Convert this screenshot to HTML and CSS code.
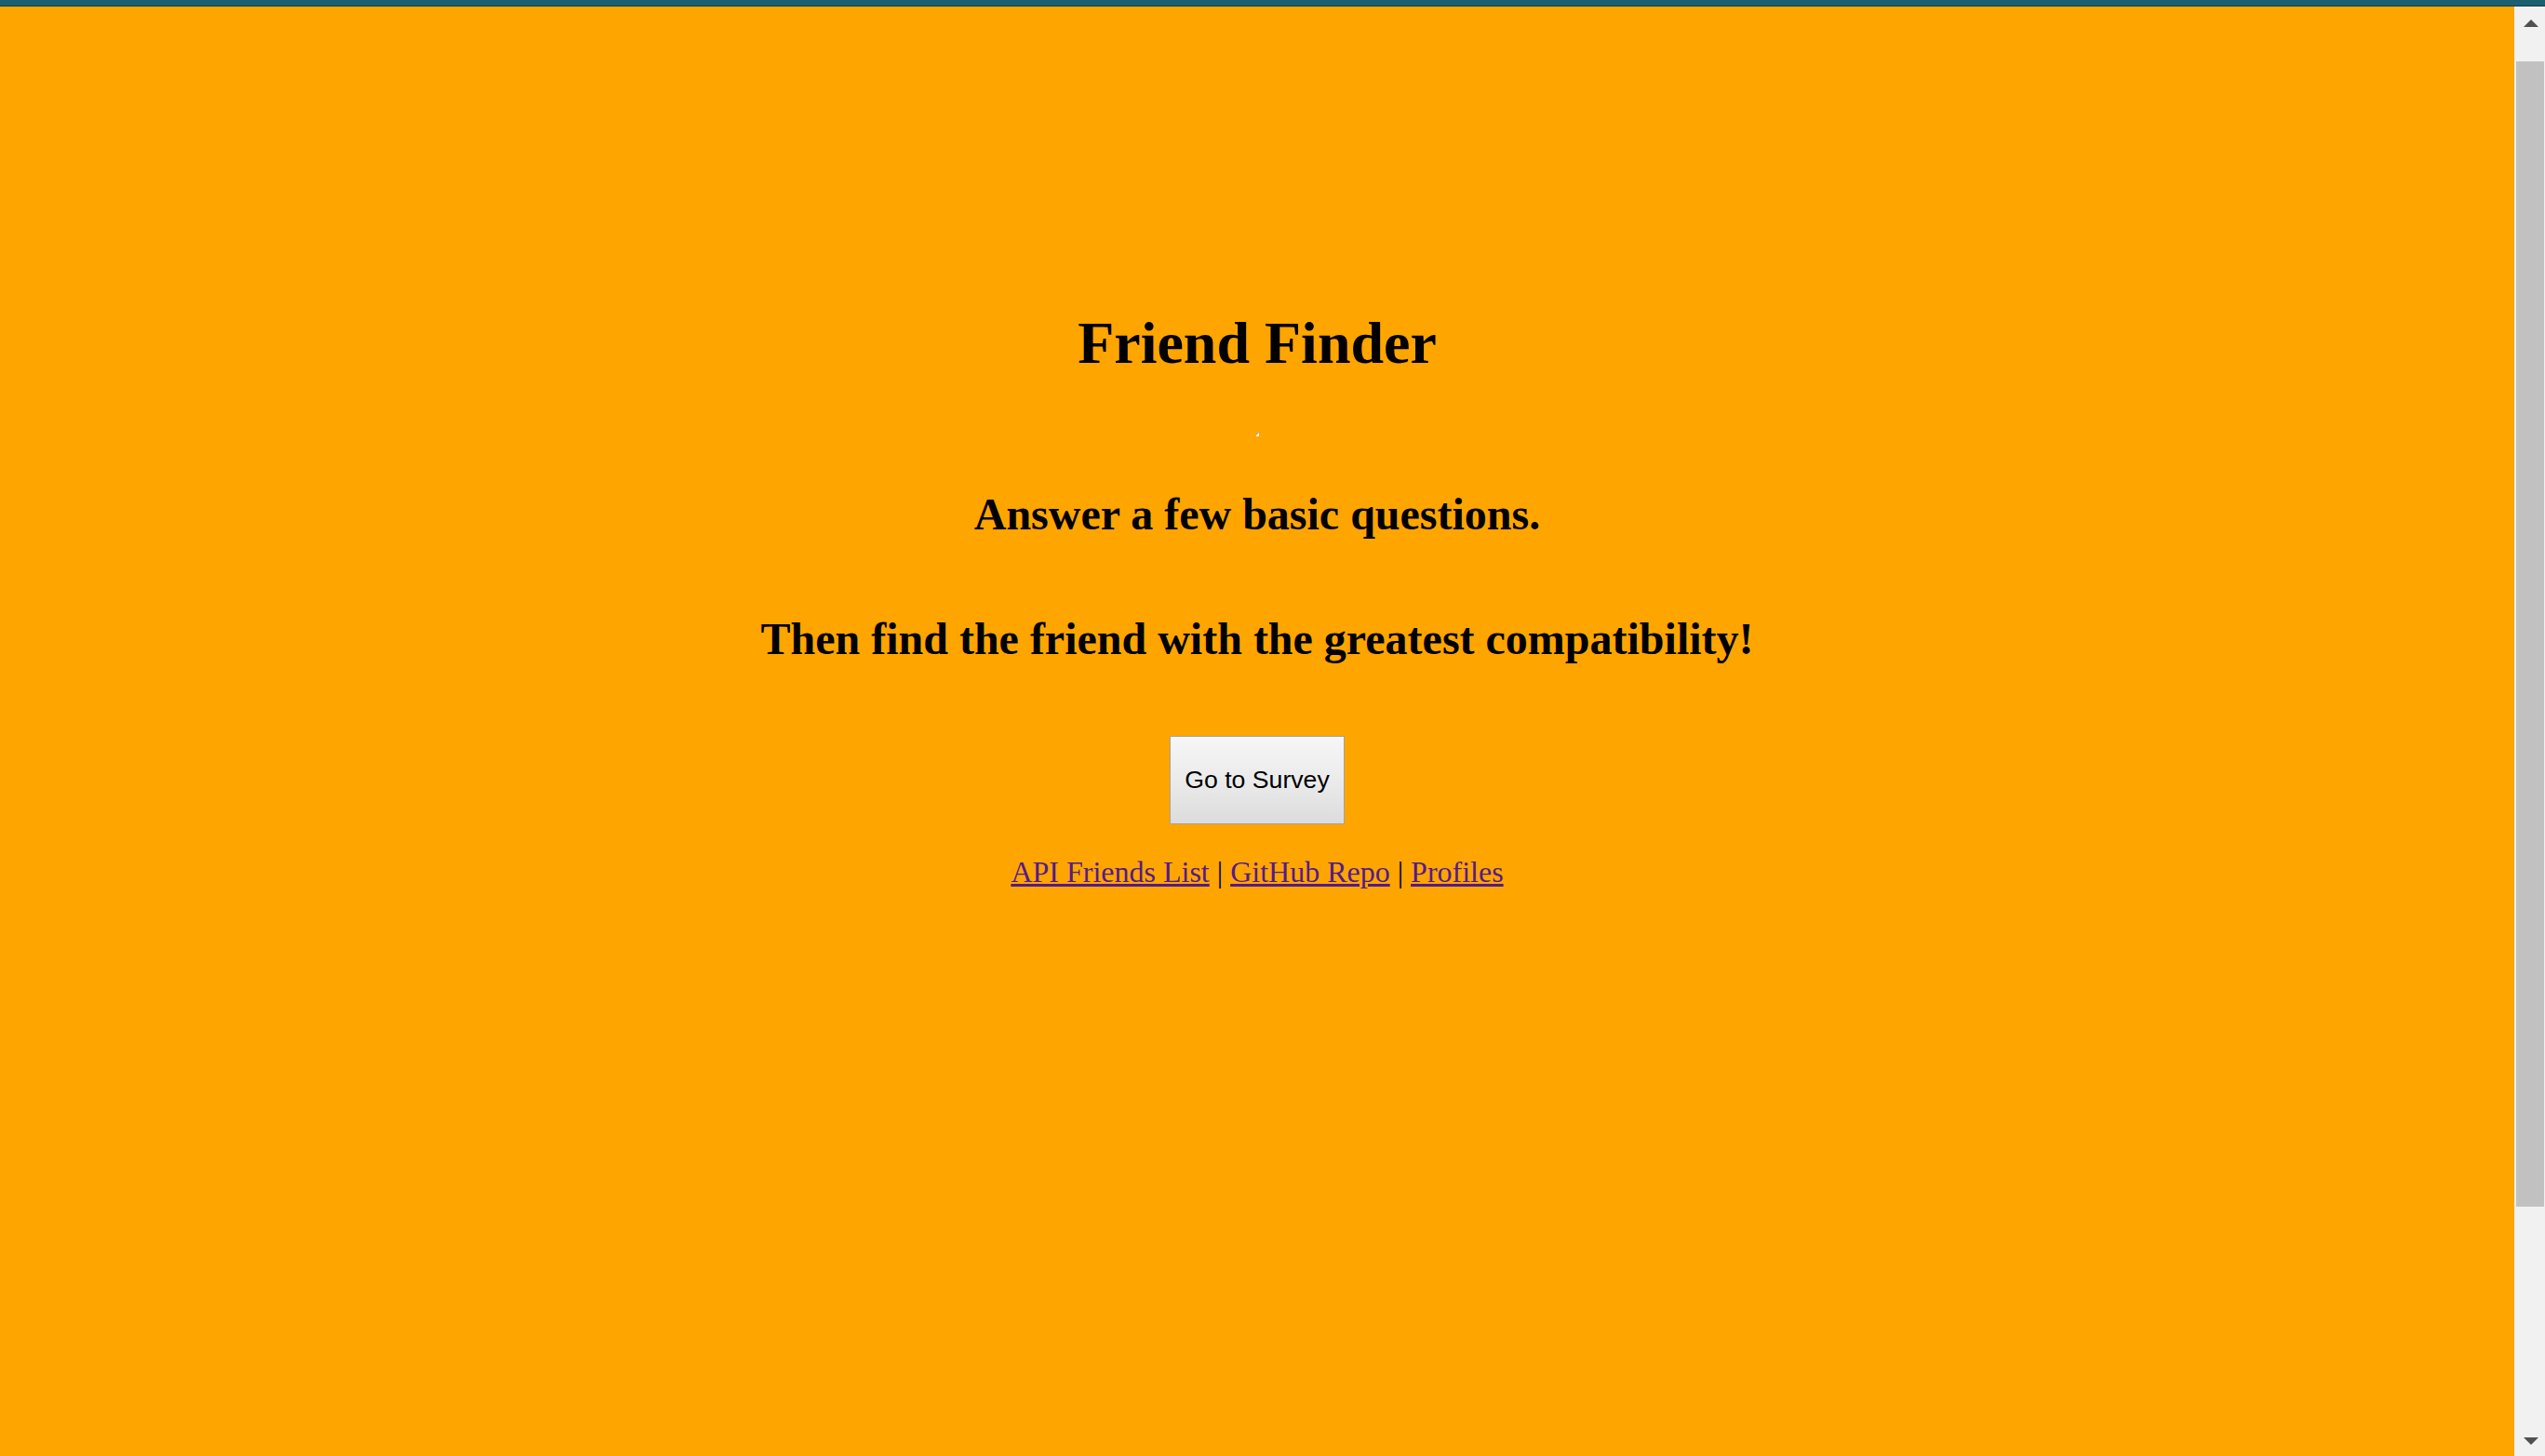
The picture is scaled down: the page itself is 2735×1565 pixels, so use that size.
FILE: index.html
```html
<!DOCTYPE html>
<html lang="en">
<head>
<meta charset="utf-8">
<title>Friend Finder</title>
<link rel="stylesheet" href="styles.css">
</head>
<body>
<div class="topbar"></div>
<div class="window">
  <main class="page">
    <h1 class="title">Friend Finder</h1>
    <span class="broken-img" aria-hidden="true"></span>
    <h2 class="lead lead-first">Answer a few basic questions.</h2>
    <h2 class="lead lead-second">Then find the friend with the greatest compatibility!</h2>
    <div class="actions">
      <button class="survey-btn" type="button">Go to Survey</button>
    </div>
    <p class="links"><a href="#">API Friends List</a> | <a href="#">GitHub Repo</a> | <a href="#">Profiles</a></p>
  </main>
  <div class="scrollbar" aria-hidden="true">
    <div class="sb-btn sb-up">
      <svg width="16" height="8" viewBox="0 0 16 8"><polygon points="8,0 16,8 0,8" fill="#505050"/></svg>
    </div>
    <div class="sb-track">
      <div class="sb-thumb"></div>
    </div>
    <div class="sb-btn sb-down">
      <svg width="16" height="8" viewBox="0 0 16 8"><polygon points="0,0 16,0 8,8" fill="#505050"/></svg>
    </div>
  </div>
</div>
</body>
</html>
```
FILE: styles.css
```css
html, body {
  margin: 0;
  padding: 0;
  height: 100%;
  overflow: hidden;
}

body {
  display: flex;
  flex-direction: column;
  background: #ffa500;
  font-family: "Liberation Serif", "Times New Roman", serif;
  color: #000;
}

.topbar {
  height: 6px;
  background: #1b5f70;
  border-bottom: 1px solid #123f4b;
  flex: none;
}

.window {
  flex: 1;
  display: flex;
  min-height: 0;
}

.page {
  flex: 1;
  display: flex;
  flex-direction: column;
  align-items: center;
  padding-top: 325px;
  background: #ffa500;
}

.title {
  margin: 0;
  font-size: 64px;
  line-height: 74px;
  font-weight: bold;
}

.broken-img {
  display: block;
  width: 3px;
  height: 4px;
  margin-top: 59px;
  background: linear-gradient(135deg, #9a9a9a 0%, #c8c8c8 50%, #ffffff 51%, #ffffff 100%);
}

.lead {
  margin: 0;
  font-size: 48px;
  line-height: 55px;
  font-weight: bold;
}

.lead-first {
  margin-top: 56px;
}

.lead-second {
  margin-top: 79px;
}

.actions {
  margin-top: 77px;
  display: flex;
  justify-content: center;
}

.survey-btn {
  box-sizing: border-box;
  height: 95px;
  padding: 0 15px;
  border: 1px solid #a3a3a3;
  border-radius: 0;
  background: linear-gradient(to bottom, #f6f6f6 0%, #ebebeb 50%, #dcdcdc 100%);
  font-family: "Liberation Sans", Arial, sans-serif;
  font-size: 26.67px;
  color: #000;
}

.links {
  margin: 33px 0 0;
  font-size: 32px;
  line-height: 37px;
}

.links a {
  color: #551a8b;
  text-decoration: underline;
}

.scrollbar {
  flex: none;
  width: 33px;
  display: flex;
  flex-direction: column;
  background: #f1f1f1;
}

.sb-btn {
  display: flex;
  align-items: center;
  justify-content: center;
  padding-left: 2px;
}

.sb-up {
  height: 36px;
}

.sb-down {
  height: 33px;
}

.sb-track {
  flex: 1;
  padding: 23px 1px 0 2px;
}

.sb-thumb {
  height: 1231px;
  background: #c1c1c1;
}
```
